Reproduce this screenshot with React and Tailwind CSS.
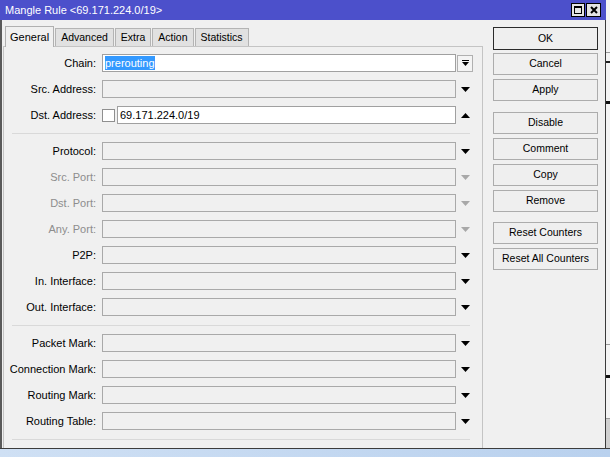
import React from 'react';

const FONT = { fontFamily: '"Liberation Sans", Arial, sans-serif' };

const TABS = ['General', 'Advanced', 'Extra', 'Action', 'Statistics'];

const SECTIONS = [
  [
    { label: 'Protocol' },
    { label: 'Src. Port', disabled: true },
    { label: 'Dst. Port', disabled: true },
    { label: 'Any. Port', disabled: true },
    { label: 'P2P' },
    { label: 'In. Interface' },
    { label: 'Out. Interface' },
  ],
  [
    { label: 'Packet Mark' },
    { label: 'Connection Mark' },
    { label: 'Routing Mark' },
    { label: 'Routing Table' },
  ],
];

const BUTTONS = [
  { label: 'OK', mt: 'mt-0', primary: true },
  { label: 'Cancel', mt: 'mt-[3px]' },
  { label: 'Apply', mt: 'mt-[4px]' },
  { label: 'Disable', mt: 'mt-[11px]' },
  { label: 'Comment', mt: 'mt-[4px]' },
  { label: 'Copy', mt: 'mt-[4px]' },
  { label: 'Remove', mt: 'mt-[4px]' },
  { label: 'Reset Counters', mt: 'mt-[10px]' },
  { label: 'Reset All Counters', mt: 'mt-[4px]' },
];

function Arrow({ up, gray }) {
  return (
    <div className="flex w-[18px] shrink-0 items-center justify-center">
      <svg width="9" height="5" viewBox="0 0 9 5">
        <polygon points={up ? '0,5 9,5 4.5,0' : '0,0 9,0 4.5,5'} fill={gray ? '#a8a8a8' : '#000'} />
      </svg>
    </div>
  );
}

function Label({ children, disabled }) {
  return (
    <div className={`w-[92px] shrink-0 text-right text-[11px] ${disabled ? 'text-[#8d8d8d]' : 'text-black'}`}>
      {children}
    </div>
  );
}

function Separator() {
  return <div className="mb-[8px] ml-[8px] mt-[9px] h-px w-[458px] bg-[#d9d9d9]" />;
}

function Row({ label, disabled }) {
  return (
    <div className="flex h-[18px] items-center">
      <Label disabled={disabled}>{label ? `${label}:` : ''}</Label>
      <div className="ml-[6px] h-[18px] w-[354px] shrink-0 border border-[#a9a9a9] bg-[#f0f0f0]" />
      <Arrow gray={disabled} />
    </div>
  );
}

export default function App() {
  return (
    <div className="flex h-[457px] w-[610px] flex-col overflow-hidden bg-[#f0f0f0] text-black" style={FONT}>
      <div className="flex h-[448px]">
        {/* Window */}
        <div className="flex w-[606px] shrink-0 flex-col">
          {/* Title bar */}
          <div className="flex h-[20px] shrink-0 items-center bg-[#4c50cb] pl-[5px] pr-[5px]">
            <span className="text-[11px] text-white">Mangle Rule &lt;69.171.224.0/19&gt;</span>
            <div className="ml-auto flex gap-[1px]">
              <div className="flex h-[14px] w-[14px] items-center justify-center border border-black bg-[#e4e4e4]">
                <div className="h-[8px] w-[8px] border border-black border-t-2" />
              </div>
              <div className="flex h-[14px] w-[15px] items-center justify-center border border-black bg-[#e4e4e4]">
                <svg width="8" height="8" viewBox="0 0 8 8">
                  <path d="M1 1 L7 7 M7 1 L1 7" stroke="#000" strokeWidth="2" />
                </svg>
              </div>
            </div>
          </div>

          {/* Body */}
          <div className="flex flex-1 overflow-hidden border-l-2 border-r border-l-[#5a5a5a] border-r-[#3a3a3a]">
            {/* Tabs + panel */}
            <div className="ml-[1px] flex w-[480px] shrink-0 flex-col pt-[6px]">
              <div className="flex items-end pl-[2px]">
                {TABS.map((t, i) =>
                  i === 0 ? (
                    <div
                      key={t}
                      className="relative z-10 -mb-px flex h-[21px] items-center border border-b-0 border-[#b0b0b0] bg-[#f0f0f0] px-[4px] text-[11px]"
                    >
                      {t}
                    </div>
                  ) : (
                    <div
                      key={t}
                      className="ml-[1px] flex h-[18px] items-center border border-b-0 border-[#b4b4b4] bg-[#e1e1e1] px-[5px] text-[10.5px]"
                    >
                      {t}
                    </div>
                  )
                )}
              </div>
              <div className="flex-1 border border-b-0 border-[#c4c4c4] pt-[7px]">
                {/* Chain */}
                <div className="flex h-[18px] items-center">
                  <Label>Chain:</Label>
                  <div className="ml-[6px] flex h-[18px] w-[354px] shrink-0 items-center border border-[#a0a0a0] bg-white pl-[2px]">
                    <span className="bg-[#3399ff] text-[11px] leading-[14px] text-white">prerouting</span>
                  </div>
                  <div className="ml-[1px] flex h-[17px] w-[16px] shrink-0 flex-col items-center justify-center gap-[1px] border border-[#b0b0b0] bg-[#f4f4f4]">
                    <div className="h-px w-[7px] bg-black" />
                    <svg width="7" height="4" viewBox="0 0 7 4">
                      <polygon points="0,0 7,0 3.5,4" fill="#000" />
                    </svg>
                  </div>
                </div>

                <div className="mt-[8px]">
                  <Row label="Src. Address" />
                </div>

                {/* Dst address */}
                <div className="mt-[8px] flex h-[18px] items-center">
                  <Label>Dst. Address:</Label>
                  <div className="ml-[6px] h-[13px] w-[13px] shrink-0 border border-[#8f8f8f] bg-white" />
                  <div className="ml-[2px] flex h-[18px] w-[339px] shrink-0 items-center border border-[#a0a0a0] bg-white pl-[2px] text-[11px]">
                    69.171.224.0/19
                  </div>
                  <Arrow up />
                </div>

                {SECTIONS.map((rows, si) => (
                  <div key={si}>
                    <Separator />
                    <div className="flex flex-col gap-[8px]">
                      {rows.map((r) => (
                        <Row key={r.label} label={r.label} disabled={r.disabled} />
                      ))}
                    </div>
                  </div>
                ))}
                <Separator />
                <Row label="" />
              </div>
            </div>

            {/* Buttons */}
            <div className="ml-[10px] flex w-[105px] shrink-0 flex-col pt-[7px]">
              {BUTTONS.map((b) => (
                <div
                  key={b.label}
                  className={`${b.mt} flex ${b.primary ? 'h-[23px] border-[#2b2b2b]' : 'h-[22px] border-[#acacac]'} items-center justify-center border bg-[#efefef] text-[10.5px]`}
                >
                  {b.label}
                </div>
              ))}
            </div>
          </div>
        </div>

        {/* Sliver of the window behind */}
        <div className="flex flex-1 flex-col bg-[#f4f4f4]">
          <div className="h-[52px]" />
          <div className="h-px bg-[#9a9a9a]" />
          <div className="h-[8px]" />
          <div className="h-[2px] bg-[#222]" />
          <div className="h-[38px]" />
          <div className="h-[3px] bg-[#111]" />
          <div className="h-[240px]" />
          <div className="h-px bg-[#9a9a9a]" />
          <div className="h-[30px]" />
          <div className="h-[3px] bg-[#111]" />
          <div className="h-[40px]" />
          <div className="h-px bg-[#9a9a9a]" />
          <div className="flex-1 bg-[#d0d0d0]" />
        </div>
      </div>
      <div className="h-px bg-[#3c3c3c]" />
      <div className="flex-1 bg-gradient-to-r from-[#cfe0f4] to-[#b9d1ee]" />
    </div>
  );
}
